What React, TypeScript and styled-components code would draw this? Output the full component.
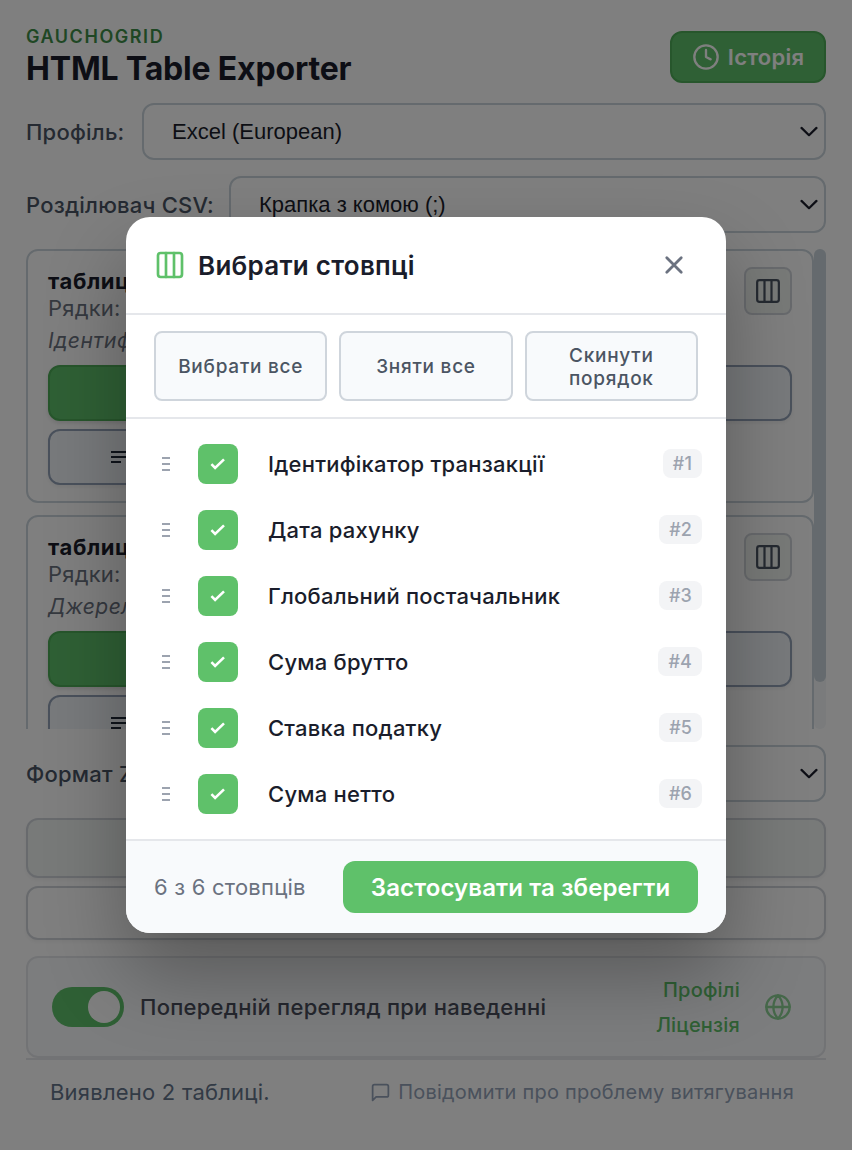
import React from 'react';
import styled, { createGlobalStyle, css } from 'styled-components';

const green = '#5fc16a';
const greenEdge = '#4eac58';

const GlobalStyle = createGlobalStyle`
  *, *::before, *::after { box-sizing: border-box; }
  html, body { margin: 0; padding: 0; background: #fff; }
  body {
    width: 852px;
    height: 1150px;
    overflow: hidden;
    font-family: Inter, "Liberation Sans", sans-serif;
    font-size: 22px;
    letter-spacing: 0.22px;
    color: #1a1d2b;
  }
  button { font: inherit; letter-spacing: inherit; color: inherit; margin: 0; padding: 0; }
`;

const Popup = styled.main`
  display: flex;
  flex-direction: column;
  height: 1150px;
  padding: 24px 26px 0;
`;

const Header = styled.header`
  display: flex;
  justify-content: space-between;
  height: 79px;
  padding-top: 1px;
`;

const Brand = styled.div`
  display: flex;
  flex-direction: column;
`;

const Eyebrow = styled.span`
  font-size: 18px;
  line-height: 24px;
  font-weight: 600;
  letter-spacing: 1.55px;
  color: #3f8f49;
`;

const Title = styled.h1`
  margin: 0;
  font-size: 32px;
  line-height: 40px;
  font-weight: 700;
  letter-spacing: -0.18px;
`;

const HistoryButton = styled.button`
  display: flex;
  align-items: center;
  justify-content: center;
  gap: 8px;
  width: 156px;
  height: 52px;
  margin-top: 6px;
  border: 2px solid ${greenEdge};
  border-radius: 12px;
  background: ${green};
  color: #fff;
  font-weight: 600;
`;

const Field = styled.div`
  display: flex;
  align-items: center;
  height: 57px;
  margin-bottom: 16px;
  flex: none;
`;

const FieldLabel = styled.label<{ $width: number }>`
  flex: none;
  width: ${(p) => p.$width}px;
  white-space: nowrap;
  font-weight: 500;
  color: #4a5565;
`;

const Select = styled.div`
  flex: 1;
  display: flex;
  align-items: center;
  justify-content: space-between;
  height: 57px;
  padding: 0 6px 0 28px;
  border: 2px solid #cbd5dc;
  border-radius: 12px;
  font-family: "Liberation Sans", Arial, sans-serif;
  font-size: 22px;
  letter-spacing: 0;
`;

const TableList = styled.section`
  display: flex;
  flex: none;
  height: 480px;
  margin-bottom: 16px;
  overflow: hidden;
`;

const Cards = styled.div`
  flex: 1;
  display: flex;
  flex-direction: column;
  gap: 12px;
`;

const ScrollTrack = styled.div`
  width: 12px;
  border-radius: 6px;
  background: #f4f7f9;
`;

const ScrollThumb = styled.div`
  height: 433px;
  border-radius: 6px;
  background: #cbd5dc;
`;

const Card = styled.article`
  flex: none;
  height: 254px;
  padding: 16px 20px;
  border: 2px solid #cbd5dc;
  border-radius: 12px;
`;

const CardTop = styled.div`
  display: flex;
  justify-content: space-between;
  height: 98px;
`;

const CardTitle = styled.h2`
  margin: 1px 0;
  font-size: 22px;
  line-height: 26px;
  font-weight: 700;
  letter-spacing: 0.6px;
`;

const CardMeta = styled.p`
  margin: 0;
  line-height: 26px;
  color: #6b7280;
`;

const CardPreview = styled.p`
  margin: 8px 0 0;
  font-size: 21px;
  line-height: 24px;
  font-style: italic;
  letter-spacing: 0.5px;
  color: #6b7280;
`;

const IconButton = styled.button`
  display: flex;
  align-items: center;
  justify-content: center;
  width: 48px;
  height: 48px;
  border: 2px solid #d1d5db;
  border-radius: 8px;
  background: #f1f5f1;
  color: #4b5563;
`;

const ActionGrid = styled.div`
  display: grid;
  grid-template-columns: 1fr 1fr;
  gap: 8px;
`;

const Action = styled.button<{ $primary?: boolean }>`
  display: flex;
  align-items: center;
  height: 56px;
  padding-left: 60px;
  border-radius: 12px;
  ${(p) =>
    p.$primary
      ? css`
          border: 2px solid ${greenEdge};
          background: ${green};
          box-shadow: 0 2px 4px rgba(0, 0, 0, 0.12);
        `
      : css`
          border: 2px solid #94a3b8;
          background: #f1f5f9;
          box-shadow: 0 2px 4px rgba(0, 0, 0, 0.06);
        `}
`;

const WideButton = styled.button<{ $tinted?: boolean }>`
  flex: none;
  height: ${(p) => (p.$tinted ? 60 : 54)}px;
  margin-bottom: ${(p) => (p.$tinted ? 8 : 16)}px;
  border: 2px solid #d1d5db;
  border-radius: 12px;
  background: ${(p) => (p.$tinted ? '#f0f5f2' : '#fff')};
  box-shadow: 0 2px 4px rgba(0, 0, 0, 0.05);
`;

const Settings = styled.section`
  flex: none;
  display: flex;
  align-items: center;
  height: 102px;
  padding: 0 32px 0 24px;
  border: 2px solid #e5e7eb;
  border-radius: 12px;
  background: #f8fafc;
`;

const Toggle = styled.span`
  display: flex;
  justify-content: flex-end;
  width: 72px;
  height: 40px;
  padding: 4px;
  border-radius: 20px;
  background: ${green};
`;

const Knob = styled.span`
  width: 32px;
  height: 32px;
  border-radius: 50%;
  background: #fff;
`;

const ToggleLabel = styled.span`
  flex: 1;
  margin-left: 16px;
  font-weight: 500;
  letter-spacing: 0.26px;
  color: #4b4f5c;
`;

const Links = styled.nav`
  display: flex;
  flex-direction: column;
  align-items: flex-end;
  gap: 11px;
  margin-right: 24px;
  font-size: 20px;
  line-height: 24px;
  font-weight: 500;
  letter-spacing: 0.2px;
  color: ${green};
`;

const GlobeWrap = styled.span`
  display: flex;
  color: ${green};
  opacity: 0.7;
`;

const Footer = styled.footer`
  display: flex;
  align-items: center;
  justify-content: space-between;
  height: 66px;
  padding: 0 32px 0 24px;
  border-top: 2px solid #e5e7eb;
  color: #64748b;
`;

const Report = styled.span`
  display: flex;
  align-items: center;
  gap: 7px;
  font-size: 20px;
  letter-spacing: 0.23px;
  color: #94a3b8;
`;

const Overlay = styled.div`
  position: absolute;
  inset: 0;
  display: flex;
  align-items: center;
  justify-content: center;
  background: rgba(0, 0, 0, 0.5);
`;

const Dialog = styled.section`
  display: flex;
  flex-direction: column;
  width: 600px;
  height: 716px;
  overflow: hidden;
  border-radius: 24px;
  background: #fff;
  box-shadow: 0 40px 80px rgba(0, 0, 0, 0.3);
`;

const DialogHeader = styled.header`
  display: flex;
  align-items: center;
  gap: 12px;
  height: 98px;
  padding: 0 38px 0 28px;
  border-bottom: 2px solid #e5e7eb;
`;

const IconTint = styled.span<{ $color: string }>`
  display: flex;
  color: ${(p) => p.$color};
`;

const DialogTitle = styled.h2`
  flex: 1;
  margin: 0;
  padding-top: 2px;
  font-size: 26px;
  line-height: 32px;
  font-weight: 600;
  letter-spacing: 0.26px;
`;

const Toolbar = styled.div`
  display: flex;
  gap: 12px;
  height: 104px;
  padding: 16px 28px;
  border-bottom: 2px solid #e5e7eb;
`;

const ToolButton = styled.button`
  flex: 1 1 0;
  padding: 1px 20px 0;
  border: 2px solid #cfd5dc;
  border-radius: 8px;
  background: #f8fafc;
  color: #4b5563;
  font-size: 19px;
  line-height: 23px;
  font-weight: 500;
  letter-spacing: 0.75px;
`;

const ColumnList = styled.ul`
  list-style: none;
  margin: 0;
  padding: 12px 24px 12px 36px;
  height: 420px;
`;

const ColumnRow = styled.li`
  display: flex;
  align-items: center;
  height: 66px;
`;

const Checkbox = styled.span`
  display: flex;
  width: 40px;
  height: 40px;
  margin: 0 30px 0 28px;
  border-radius: 8px;
  background: ${green};
`;

const ColumnName = styled.span`
  flex: 1;
  font-weight: 500;
`;

const Badge = styled.span`
  height: 29px;
  margin-bottom: 1px;
  padding: 0 10px;
  border-radius: 8px;
  background: #f3f4f6;
  color: #9ca3af;
  font-size: 18px;
  line-height: 29px;
  font-weight: 500;
  letter-spacing: 0.1px;
`;

const DialogFooter = styled.footer`
  display: flex;
  align-items: center;
  justify-content: space-between;
  height: 94px;
  padding: 0 28px;
  border-top: 2px solid #e5e7eb;
  background: #f8fafc;
  color: #6b7280;
`;

const ApplyButton = styled.button`
  width: 355px;
  height: 52px;
  border: 0;
  border-radius: 12px;
  background: ${green};
  color: #fff;
  font-size: 24px;
  font-weight: 600;
  letter-spacing: 0.12px;
`;

type IconProps = { size: number; children: React.ReactNode; weight?: number };

const Icon = ({ size, children, weight = 2 }: IconProps) => (
  <svg
    width={size}
    height={size}
    viewBox="0 0 24 24"
    fill="none"
    stroke="currentColor"
    strokeWidth={weight}
    strokeLinecap="round"
    strokeLinejoin="round"
  >
    {children}
  </svg>
);

const ColumnsIcon = ({ size }: { size: number }) => (
  <Icon size={size}>
    <rect x="3" y="3" width="18" height="18" rx="2" />
    <path d="M9 3v18M15 3v18" />
  </Icon>
);

const Chevron = () => (
  <svg width="20" height="14" viewBox="0 0 20 14" fill="none" stroke="#1a1d2b" strokeWidth="2.2" strokeLinecap="round" strokeLinejoin="round">
    <path d="M3.5 2.9 L11 10.2 L18.5 2.9" />
  </svg>
);

const Grip = () => (
  <svg width="8" height="14" viewBox="0 0 8 14" fill="#9ca3af">
    <path d="M0 0h8v2H0zM0 6h8v2H0zM0 12h8v2H0z" />
  </svg>
);

const LinesIcon = () => (
  <svg width="20" height="14" viewBox="0 0 20 14" fill="#1f2937">
    <path d="M1 1h18v2H1zM1 6h18v2H1zM1 11h10v2H1z" />
  </svg>
);

const tables = [
  { title: 'таблиця 1', rows: 'Рядки: 6', preview: 'Ідентифікатор' },
  { title: 'таблиця 2', rows: 'Рядки: 6', preview: 'Джерело' },
];

const columns = [
  'Ідентифікатор транзакції',
  'Дата рахунку',
  'Глобальний постачальник',
  'Сума брутто',
  'Ставка податку',
  'Сума нетто',
];

export default function App() {
  return (
    <>
      <GlobalStyle />
      <Popup>
        <Header>
          <Brand>
            <Eyebrow>GAUCHOGRID</Eyebrow>
            <Title>HTML Table Exporter</Title>
          </Brand>
          <HistoryButton>
            <Icon size={28}>
              <circle cx="12" cy="12" r="10" />
              <path d="M12 6v6l4 2" />
            </Icon>
            Історія
          </HistoryButton>
        </Header>

        <Field>
          <FieldLabel $width={116}>Профіль:</FieldLabel>
          <Select>
            Excel (European)
            <Chevron />
          </Select>
        </Field>
        <Field>
          <FieldLabel $width={203}>Розділювач CSV:</FieldLabel>
          <Select>
            Крапка з комою (;)
            <Chevron />
          </Select>
        </Field>

        <TableList>
          <Cards>
            {tables.map((t) => (
              <Card key={t.title}>
                <CardTop>
                  <div>
                    <CardTitle>{t.title}</CardTitle>
                    <CardMeta>{t.rows}</CardMeta>
                    <CardPreview>{t.preview}</CardPreview>
                  </div>
                  <IconButton>
                    <Icon size={28} weight={1.9}>
                      <rect x="2.7" y="2.7" width="18.6" height="18.6" rx="2" />
                      <path d="M9 2.7v18.6M15 2.7v18.6" />
                    </Icon>
                  </IconButton>
                </CardTop>
                <ActionGrid>
                  <Action $primary />
                  <Action />
                  <Action>
                    <LinesIcon />
                  </Action>
                </ActionGrid>
              </Card>
            ))}
          </Cards>
          <ScrollTrack>
            <ScrollThumb />
          </ScrollTrack>
        </TableList>

        <Field>
          <FieldLabel $width={156}>Формат ZIP:</FieldLabel>
          <Select>
            <span />
            <Chevron />
          </Select>
        </Field>
        <WideButton $tinted />
        <WideButton />

        <Settings>
          <Toggle>
            <Knob />
          </Toggle>
          <ToggleLabel>Попередній перегляд при наведенні</ToggleLabel>
          <Links>
            <span>Профілі</span>
            <span>Ліцензія</span>
          </Links>
          <GlobeWrap>
            <Icon size={28}>
              <circle cx="12" cy="12" r="10" />
              <path d="M2 12h20M12 2a15.3 15.3 0 0 1 4 10 15.3 15.3 0 0 1-4 10 15.3 15.3 0 0 1-4-10 15.3 15.3 0 0 1 4-10z" />
            </Icon>
          </GlobeWrap>
        </Settings>
        <Footer>
          <span>Виявлено 2 таблиці.</span>
          <Report>
            <Icon size={21}>
              <path d="M21 15a2 2 0 0 1-2 2H7l-4 4V5a2 2 0 0 1 2-2h14a2 2 0 0 1 2 2z" />
            </Icon>
            Повідомити про проблему витягування
          </Report>
        </Footer>
      </Popup>

      <Overlay>
        <Dialog role="dialog">
          <DialogHeader>
            <IconTint $color={green}>
              <ColumnsIcon size={32} />
            </IconTint>
            <DialogTitle>Вибрати стовпці</DialogTitle>
            <IconTint $color="#6b7280">
              <Icon size={28} weight={2.4}>
                <path d="M18.2 5.8 5.8 18.2M5.8 5.8l12.4 12.4" />
              </Icon>
            </IconTint>
          </DialogHeader>
          <Toolbar>
            <ToolButton>Вибрати все</ToolButton>
            <ToolButton>Зняти все</ToolButton>
            <ToolButton>Скинути порядок</ToolButton>
          </Toolbar>
          <ColumnList>
            {columns.map((name, i) => (
              <ColumnRow key={name}>
                <Grip />
                <Checkbox>
                  <svg width="40" height="40" viewBox="0 0 40 40" fill="none" stroke="#fff" strokeWidth="2.6">
                    <path d="M13.4 20.2 L17.1 23.9 L26 15.4" />
                  </svg>
                </Checkbox>
                <ColumnName>{name}</ColumnName>
                <Badge>#{i + 1}</Badge>
              </ColumnRow>
            ))}
          </ColumnList>
          <DialogFooter>
            <span>6 з 6 стовпців</span>
            <ApplyButton>Застосувати та зберегти</ApplyButton>
          </DialogFooter>
        </Dialog>
      </Overlay>
    </>
  );
}
